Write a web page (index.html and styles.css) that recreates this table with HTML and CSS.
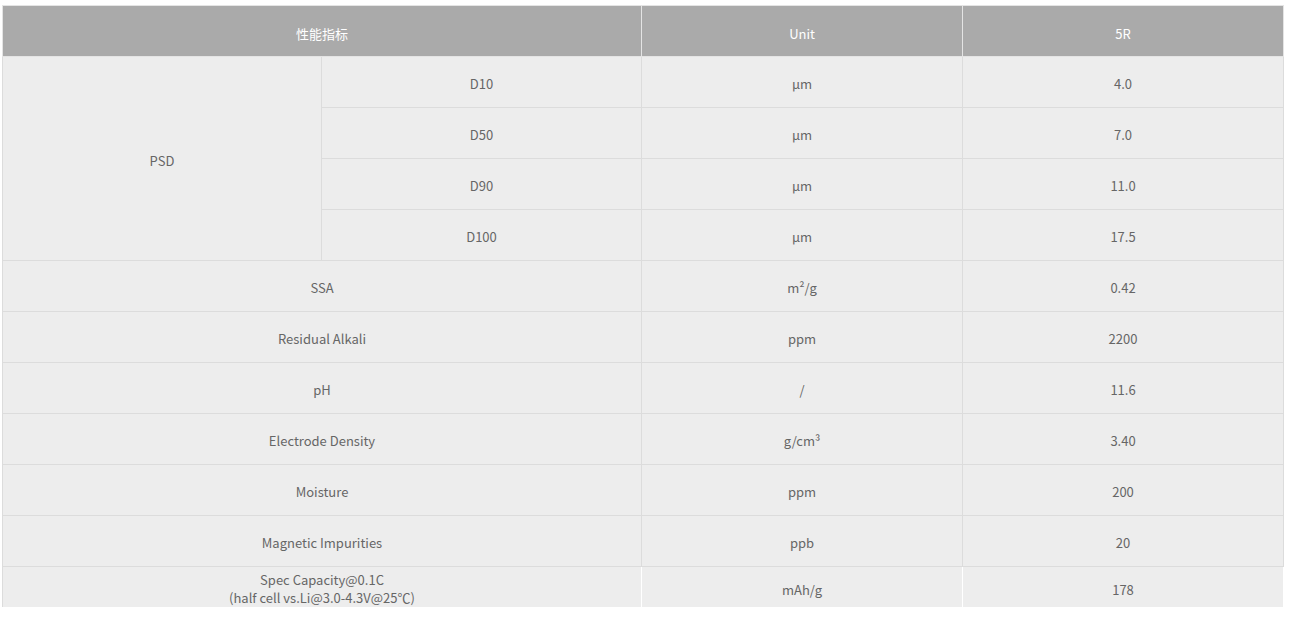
FILE: index.html
```html
<!DOCTYPE html>
<html lang="zh">
<head>
<meta charset="utf-8">
<link rel="stylesheet" href="styles.css">
</head>
<body>
<div class="wrap">
<table class="spec">
  <colgroup><col class="c1"><col class="c2"><col class="c3"><col class="c4"></colgroup>
  <thead>
    <tr><th colspan="2">性能指标</th><th>Unit</th><th>5R</th></tr>
  </thead>
  <tbody>
    <tr><td rowspan="4">PSD</td><td>D10</td><td>μm</td><td>4.0</td></tr>
    <tr><td>D50</td><td>μm</td><td>7.0</td></tr>
    <tr><td>D90</td><td>μm</td><td>11.0</td></tr>
    <tr><td>D100</td><td>μm</td><td>17.5</td></tr>
    <tr><td colspan="2">SSA</td><td>m²/g</td><td>0.42</td></tr>
    <tr><td colspan="2">Residual Alkali</td><td>ppm</td><td>2200</td></tr>
    <tr><td colspan="2">pH</td><td>/</td><td>11.6</td></tr>
    <tr><td colspan="2">Electrode Density</td><td>g/cm³</td><td>3.40</td></tr>
    <tr><td colspan="2">Moisture</td><td>ppm</td><td>200</td></tr>
    <tr><td colspan="2">Magnetic Impurities</td><td>ppb</td><td>20</td></tr>
    <tr class="last"><td colspan="2">Spec Capacity@0.1C<br>(half cell vs.Li@3.0-4.3V@25℃)</td><td>mAh/g</td><td>178</td></tr>
  </tbody>
</table>
</div>
</body>
</html>
```
FILE: styles.css
```css
html, body {
  margin: 0;
  padding: 0;
  background: #fff;
}
.wrap {
  padding: 5px 0 0 2px;
  height: 602px;
  overflow: hidden;
}
.spec {
  border-collapse: collapse;
  table-layout: fixed;
  width: 1281px;
  font-family: "Noto Sans CJK SC", "Noto Sans", sans-serif;
  font-size: 13px;
  color: #666;
  text-align: center;
}
.c1 { width: 319px; }
.c2 { width: 320px; }
.c3 { width: 321px; }
.c4 { width: 321px; }
.spec th, .spec td {
  border: 1px solid #dcdcdc;
  height: 46px;
  padding: 4px 0 0 0;
  vertical-align: middle;
  line-height: 18px;
}
.spec th {
  background: #aaaaaa;
  color: #fff;
  font-weight: normal;
  border-color: #e4e4e4;
  padding-top: 6px;
  height: 44px;
}
.spec td {
  background: #ededed;
}
.spec tr.last td {
  border-bottom: none;
  border-right-color: #fff;
  height: 40px;
  vertical-align: top;
  padding-top: 4px;
  line-height: 18px;
}
.spec tr.last td:nth-child(2),
.spec tr.last td:nth-child(3) {
  padding-top: 14px;
}
```
